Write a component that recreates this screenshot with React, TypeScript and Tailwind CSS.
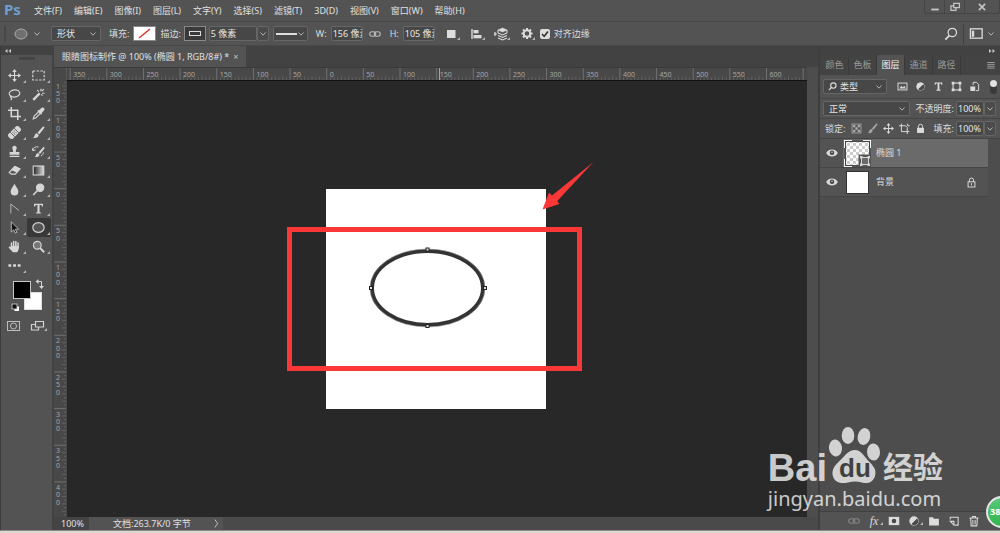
import React from "react";

type IconProps = { children: React.ReactNode; size?: string };

const Icon = ({ children, size = "size-[14px]" }: IconProps) => (
  <svg
    viewBox="0 0 16 16"
    className={`${size} block shrink-0`}
    fill="none"
    stroke="currentColor"
    strokeWidth="1.4"
    aria-hidden="true"
  >
    {children}
  </svg>
);

const Chevron = () => (
  <svg viewBox="0 0 8 6" className="pointer-events-none block h-[6px] w-2 shrink-0" fill="none" stroke="#b4b4b4" aria-hidden="true">
    <path d="M1.5 1.5 4 4.2 6.5 1.5" />
  </svg>
);

const Sep = () => <span className="h-5 w-px shrink-0 bg-[#3f3f3f]" />;

const Corner = () => (
  <svg viewBox="0 0 3 3" className="absolute right-px bottom-[2px] size-[3px]" aria-hidden="true">
    <path d="M3 0V3H0Z" fill="#b4b4b4" />
  </svg>
);

const menus = [
  "文件(F)", "编辑(E)", "图像(I)", "图层(L)", "文字(Y)", "选择(S)",
  "滤镜(T)", "3D(D)", "视图(V)", "窗口(W)", "帮助(H)",
];

const solid = { fill: "currentColor", stroke: "none" };

const LinkGlyph = () => (
  <g>
    <rect x="1" y="5" width="8" height="6" rx="3" />
    <rect x="7" y="5" width="8" height="6" rx="3" />
  </g>
);

const TypeGlyph = () => <path d="M2.5 2h11v3.4h-1.3l-.6-1.8H9.3v8.9l1.7.4V14H5v-1.1l1.7-.4V3.6H4.4l-.6 1.8H2.5Z" {...solid} />;

const MoveGlyph = () => (
  <g>
    <path d="M8 3v10M3 8h10" />
    <path d="M8 0 10.8 3.6H5.2ZM8 16 5.2 12.4h5.6ZM0 8 3.6 5.2v5.6ZM16 8l-3.6 2.8V5.2Z" {...solid} />
  </g>
);

const BrushGlyph = () => (
  <g {...solid}>
    <path d="M14.8.8c.8.5.5 1.4-.2 2.4L9 10.3 6.7 8.2 13 1.3c.6-.6 1.2-.8 1.8-.5Z" />
    <path d="M6 8.9 8.3 11c-.2 2.8-3 4.4-7.2 3.6 2-.8 1.8-2 2.3-3.4C3.9 9.7 4.8 9 6 8.9Z" />
  </g>
);

const AdjustGlyph = () => (
  <g>
    <circle cx="8" cy="8" r="5.5" fill="currentColor" />
    <path d="M12 4.6A5.2 5.2 0 0 1 4.6 12Z" fill="#4a4a4a" stroke="none" />
  </g>
);

const FrameGlyph = () => (
  <g>
    <rect x="3" y="3" width="10" height="10" strokeWidth="1.6" />
    <path d="M1 1h4v4H1zM11 1h4v4h-4zM1 11h4v4H1zM11 11h4v4h-4z" {...solid} />
  </g>
);

const LockGlyph = () => (
  <g>
    <path d="M5 8V4.8a3 3 0 0 1 6 0V8" />
    <rect x="3" y="7" width="10" height="7.5" {...solid} />
  </g>
);

const tools: { name: string; art: React.ReactNode; active?: boolean }[] = [
  { name: "移动", art: <MoveGlyph /> },
  { name: "矩形选框", art: <rect x="1" y="2.5" width="14" height="11" strokeDasharray="3 1.7" /> },
  {
    name: "套索",
    art: (
      <g>
        <path d="M4.5 10.5C1 9 .6 6.2 3 4.2 5.5 2 10.5 1.5 13 3.5c2.8 2.2 1.5 5.8-2 7-2 .8-4.5.8-6.5 0Z" />
        <path d="M4 9.5c-1.5.5-1.5 2.3 0 2.5 1 .2.5 1.8-.7 3" />
      </g>
    ),
  },
  {
    name: "魔棒",
    art: (
      <g>
        <path d="M1.5 14.5 9.5 6.5" strokeWidth="3" />
        <path d="M11 1v3M6.5 2.5l2 2M15.500 6.500h-3M14.500 1.500l-2.300 2.300M13 9.500l-1.500-1.500" />
      </g>
    ),
  },
  { name: "裁剪", art: <path d="M4 0v11.800h12M0 4h12v12" strokeWidth="1.900" /> },
  {
    name: "吸管",
    art: (
      <g>
        <path d="M8.500 5.500 2.500 11.500 1.500 14.500l3-1 6-6" />
        <path d="m7.300 4 1.500-.3L12 .9c2-1.300 4.300 1 3 3L12.300 7.200 12 8.700l-1 .8L6.500 5Z" {...solid} />
      </g>
    ),
  },
  {
    name: "污点修复",
    art: (
      <g transform="rotate(-45 8 8)">
        <rect x="-1" y="4" width="18" height="8" rx="3" fill="currentColor" stroke="none" />
        <path d="M4.500 4v8M11.500 4v8" stroke="#535353" strokeWidth="1" />
        <path d="M6.300 6.500h1M8.700 6.500h1M6.300 9.500h1M8.700 9.500h1" stroke="#535353" />
      </g>
    ),
  },
  { name: "画笔", art: <BrushGlyph /> },
  {
    name: "仿制图章",
    art: <path d="M8 1a2.700 2.700 0 0 1 2.600 3.600C10 6.200 9.500 7 9.700 8.500H14V12H2V8.500h4.300C6.500 7 6 6.200 5.400 4.600A2.700 2.700 0 0 1 8 1ZM2 13.300h12v1.500H2Z" {...solid} />,
  },
  {
    name: "历史记录画笔",
    art: (
      <g>
        <g transform="translate(2 2) scale(.88)"><BrushGlyph /></g>
        <path d="M1 6.500C1.500 3 5 1.500 8 2.500M0 3.500l1 3.500 3.500-1M14 9c0 2-1 3.500-3 4.500" strokeWidth="1.200" />
      </g>
    ),
  },
  {
    name: "橡皮擦",
    art: (
      <g>
        <path d="M8.500 3 14.500 6 9 12.500H4L1.500 10.500Z" />
        <path d="M8.500 3 14.500 6 11 10 4.800 7.200Z" fill="currentColor" />
      </g>
    ),
  },
  {
    name: "渐变",
    art: (
      <g>
        <defs>
          <linearGradient id="toolGradient"><stop stopColor="#222" /><stop offset="1" stopColor="#ddd" /></linearGradient>
        </defs>
        <rect x="1.500" y="2.500" width="13" height="11" fill="url(#toolGradient)" />
      </g>
    ),
  },
  { name: "模糊", art: <path d="M8 .8C10 4.500 12.800 7.500 12.800 10.500a4.800 4.800 0 0 1-9.600 0C3.200 7.500 6 4.500 8 .8Z" {...solid} /> },
  {
    name: "减淡",
    art: (
      <g>
        <circle cx="10" cy="5.800" r="4.500" fill="currentColor" />
        <path d="M7 9 1.500 14.800" strokeWidth="2" />
      </g>
    ),
  },
  { name: "钢笔", art: <path d="M3.500 14V2.500L13.500 10.500" strokeWidth="1.200" stroke="#b8b8b8" /> },
  { name: "文字", art: <TypeGlyph /> },
  { name: "路径选择", art: <path d="M4 1v12.500l3-2.600 1.900 4 2-.9L9.100 10.200l3.900-.3Z" fill="#161616" stroke="#d0d0d0" strokeWidth="1" /> },
  { name: "椭圆", art: <ellipse cx="8" cy="8" rx="7" ry="6" fill="#555" />, active: true },
  {
    name: "抓手",
    art: (
      <g>
        <path d="M4.300 9V3.800M7 8V1.800M9.700 8V2M12.400 9V3.800" strokeWidth="1.900" strokeLinecap="round" />
        <path d="M3.400 7.500h10c.2 4-.9 6-2 7.500H6C4.500 13.500 2.500 11 .8 9.300.6 8 2 7.600 3.400 9Z" {...solid} />
      </g>
    ),
  },
  {
    name: "缩放",
    art: (
      <g>
        <circle cx="6.500" cy="6.500" r="4.800" fill="#777" />
        <path d="m10 10 5 5" strokeWidth="2.400" />
      </g>
    ),
  },
  { name: "更多", art: <path d="M.5 8h3.500M6.300 8h3.500M12 8h3.500" strokeWidth="3" /> },
];

const UNIT = 3.665;
const range = (from: number, to: number) => Array.from({ length: to - from + 1 }, (_, i) => from + i);
const columns = range(-70, 130);
const rows = range(-29, 89);

const HorizontalRuler = () => (
  <svg className="block h-3 w-full" aria-label="水平标尺">
    <svg x="50%" overflow="visible">
      {columns.map((n) => {
        const x = -110.3 + n * UNIT;
        const major = n % 10 === 0;
        return (
          <g key={n}>
            <path d={`M${x} ${major ? 0 : n % 2 ? 9.5 : 8.5}V12`} stroke={major ? "#707070" : "#636363"} />
            {major && n < 130 && <text x={x + 3} y="9" fontSize="7" fill="#a5a5a5">{Math.abs(n * 5)}</text>}
          </g>
        );
      })}
      <path d="M2.5 0V12" stroke="#a5a5a5" />
    </svg>
  </svg>
);

const VerticalRuler = () => (
  <svg className="block h-full w-[13px] shrink-0 bg-[#484848]" aria-label="垂直标尺">
    <svg y="50%" overflow="visible">
      <text x="2" y="-210" fontSize="7" fill="#a5a5a5">1</text>
      <text x="2" y="-203" fontSize="7" fill="#a5a5a5">5</text>
      <text x="2" y="-196" fontSize="7" fill="#a5a5a5">0</text>
      {rows.map((n) => {
        const y = -109.8 + n * UNIT;
        const major = n % 10 === 0;
        return (
          <g key={n}>
            <path d={`M${major ? 0 : n % 2 ? 10 : 8} ${y}H12`} stroke={major ? "#707070" : "#636363"} />
            {major &&
              String(Math.abs(n * 5)).split("").map((d, i) => (
                <text key={i} x="2" y={y + 8 + i * 7.3} fontSize="7" fill="#a5a5a5">{d}</text>
              ))}
          </g>
        );
      })}
    </svg>
  </svg>
);

const Artboard = () => (
  <svg viewBox="0 0 220 220" className="block size-[220px] shrink-0 overflow-visible" role="img" aria-label="椭圆 1">
    <rect width="220" height="220" fill="#fff" />
    <ellipse cx="101.500" cy="99" rx="55.500" ry="37" fill="none" stroke="#333" strokeWidth="4" />
    <ellipse cx="101.500" cy="99" rx="57.500" ry="39" fill="none" stroke="#999" strokeWidth=".6" />
    {[[101.500, 60.500], [101.500, 137], [45, 99], [159, 99]].map(([x, y]) => (
      <g key={`${x}-${y}`}>
        <rect x={x - 2} y={y - 2} width="4" height="4" fill="#222" />
        <rect x={x - 1} y={y - 1} width="2" height="2" fill="#ddd" />
      </g>
    ))}
    <rect x="-36.500" y="40.500" width="290" height="139" fill="none" stroke="#fb3737" strokeWidth="5" />
    <path d="M216.500 20.500 223 3.500l3 3L267.500-27 231.300 12l2 3Z" fill="#fb3737" />
  </svg>
);

const box = "rounded-[2px] border border-[#666] bg-[#474747] text-[#e6e6e6] outline-none";

const Dropdown = ({ label, value, width, indent }: { label: string; value: string; width: string; indent: string }) => (
  <div className={`relative flex h-[15px] items-center ${width}`}>
    <select aria-label={label} className={`h-full w-full appearance-none py-0 ${indent} ${box}`}>
      <option>{value}</option>
    </select>
    <span className="absolute right-1"><Chevron /></span>
  </div>
);

const PercentField = ({ id }: { id: string }) => (
  <div className="flex shrink-0">
    <input id={id} defaultValue="100%" className={`h-[15px] w-[28px] pl-px ${box}`} />
    <button aria-label="调整数值" className="flex h-[15px] w-3 items-center justify-center rounded-[2px] border border-[#666] bg-[#4b4b4b]"><Chevron /></button>
  </div>
);

const Toolbox = () => (
  <aside className="flex w-[52px] shrink-0 flex-col border-l border-[#3c3c3c] bg-[#535353]">
    <div className="flex h-[9px] items-center bg-[#424242] pl-1">
      <svg viewBox="0 0 6 4" className="h-1 w-[6px]" fill="#c8c8c8" aria-hidden="true"><path d="M2.500 0v4L0 2ZM6 0v4L3.500 2Z" /></svg>
    </div>
    <div className="flex h-[11px] items-start justify-center pt-[2px]"><span className="h-[3px] w-4 bg-[#444]" /></div>
    <div className="grid grid-cols-2 px-[1px]">
      {tools.map((t) => (
        <button
          key={t.name}
          aria-label={t.name}
          className={`relative flex h-[19px] items-center justify-center text-[#d6d6d6] ${t.active ? "rounded-[2px] bg-[#383838]" : ""}`}
        >
          <Icon size="size-[13px]">{t.art}</Icon>
          <Corner />
        </button>
      ))}
    </div>
    <svg viewBox="0 0 50 58" className="block h-[58px] w-[50px] text-[#d6d6d6]" fill="none" role="img" aria-label="前景色和背景色">
      <rect x="23.500" y="17.500" width="17" height="17" fill="#fff" stroke="#ddd" />
      <rect x="12.500" y="6.500" width="17" height="17" fill="#000" stroke="#c8c8c8" />
      <path d="M36 6.500h4.500V12" stroke="#d6d6d6" />
      <path d="m37.500 4-3 2.500 3 2.500ZM38 11h5l-2.500 3Z" fill="#d6d6d6" />
      <rect x="13.500" y="31.500" width="4.500" height="4.500" fill="#fff" />
      <rect x="11" y="29" width="5" height="5" fill="#111" stroke="#d6d6d6" strokeWidth=".8" />
      <rect x="6.500" y="46.500" width="12" height="9" stroke="#bdbdbd" />
      <circle cx="12.500" cy="51" r="3" stroke="#bdbdbd" />
      <path d="M34.500 46.500h8v5.500h-8zM34 49.500h-3.500v5.500h7V52.500" stroke="#d0d0d0" strokeWidth="1.200" />
      <path d="M46 53v3h-3Z" fill="#b4b4b4" />
    </svg>
  </aside>
);

const OptionsBar = () => (
  <div className="flex h-[25px] items-center border-y border-[#484848] pr-[5px] text-[#dcdcdc]">
    <span className="ml-1 h-4 w-[2px] bg-[#484848]" />
    <button aria-label="椭圆工具" className="ml-2 flex items-center gap-[5px]">
      <svg viewBox="0 0 14 12" className="h-3 w-[14px]" aria-hidden="true"><ellipse cx="7" cy="6" rx="6" ry="5" fill="#707070" stroke="#aaa" /></svg>
      <Chevron />
    </button>
    <span className="mx-[5px]"><Sep /></span>
    <Dropdown label="模式" value="形状" width="w-[50px]" indent="pl-[5px]" />
    <span className="ml-2">填充:</span>
    <button aria-label="填充颜色" className="ml-1 h-[15px] w-[23px] border border-[#888] bg-white">
      <svg viewBox="0 0 21 13" className="block h-full w-full" aria-hidden="true"><path d="m5 11 11-9" stroke="#e03030" strokeWidth="1.500" /></svg>
    </button>
    <span className="ml-1">描边:</span>
    <button aria-label="描边颜色" className="ml-[3px] flex h-[15px] w-[22px] items-center justify-center border border-[#888] bg-[#3a3a3a]">
      <span className="h-[5px] w-3 border border-[#ddd]" />
    </button>
    <div className="ml-[3px] flex">
      <input aria-label="描边宽度" defaultValue="5 像素" className={`h-[15px] w-[48px] pl-px ${box}`} />
      <button aria-label="宽度选项" className="flex h-[15px] w-3 items-center justify-center rounded-[2px] border border-[#666] bg-[#4b4b4b]"><Chevron /></button>
    </div>
    <button aria-label="描边类型" className={`ml-1 flex h-[15px] w-[35px] items-center justify-between px-[2px] ${box}`}>
      <span className="h-[2px] w-[21px] bg-[#ddd]" /><Chevron />
    </button>
    <span className="mx-1"><Sep /></span>
    <label htmlFor="shapeW">W:</label>
    <input id="shapeW" defaultValue="156 像素" className={`ml-1 h-[15px] w-8 pl-px ${box}`} />
    <button aria-label="链接宽高" className="mx-[6px] text-[#bbb]"><Icon size="size-3"><LinkGlyph /></Icon></button>
    <label htmlFor="shapeH" className="ml-[3px]">H:</label>
    <input id="shapeH" defaultValue="105 像素" className={`ml-1 h-[15px] w-8 pl-px ${box}`} />
    <span className="mx-1"><Sep /></span>
    <div className="ml-px flex items-center gap-2">
      <button aria-label="路径操作" className="relative size-[17px]">
        <Icon size="size-4"><rect x="3" y="4" width="8.500" height="8" {...solid} /></Icon><Corner />
      </button>
      <button aria-label="对齐" className="relative size-[17px]">
        <Icon size="size-4"><path d="M3 3v10" /><rect x="4.500" y="4" width="5" height="3.300" {...solid} /><rect x="4.500" y="9" width="8" height="3.300" {...solid} /></Icon><Corner />
      </button>
      <button aria-label="排列" className="relative size-[17px]">
        <Icon size="size-4"><path d="M-1 8h4M1 6v4" strokeWidth="1.200" /><path d="m8.500 2 4.500 2-4.500 2L4 4Z" fill="currentColor" strokeWidth=".6" /><path d="m4 7 4.500 2L13 7M4 9.500l4.500 2 4.500-2M4 12l4.500 2 4.500-2M4 4v3M13 4v3" strokeWidth="1.100" /></Icon><Corner />
      </button>
    </div>
    <span className="mx-1"><Sep /></span>
    <button aria-label="设置" className="relative size-[17px]">
      <Icon size="size-4"><circle cx="8" cy="7.500" r="3.300" strokeWidth="2" /><path d="M8 2v2M8 11v2M2.500 7.500h2M11.500 7.500h2M4 3.500l1.500 1.500M12 3.500 10.500 5M4 11.500 5.500 10M12 11.500 10.500 10" strokeWidth="2" /></Icon><Corner />
    </button>
    <label className="ml-1 flex items-center gap-1">
      <span className="relative block size-[10px]">
        <input type="checkbox" defaultChecked className="block size-[10px] appearance-none rounded-[2px] bg-[#dcdcdc]" />
        <svg viewBox="0 0 10 10" className="pointer-events-none absolute inset-0 size-[10px]" fill="none" stroke="#333" strokeWidth="1.600" aria-hidden="true"><path d="m2 5 2.200 2.300L8 2.500" /></svg>
      </span>
      对齐边缘
    </label>
    <button aria-label="搜索" className="mr-[5px] ml-auto">
      <Icon><circle cx="9.500" cy="6.300" r="4.800" /><path d="M6 9.800 1.500 14.300" strokeWidth="2" /></Icon>
    </button>
    <Sep />
    <button aria-label="工作区" className="ml-[5px] flex items-center gap-[3px]">
      <Icon size="size-[15px]"><rect x="1.500" y="3" width="12.500" height="10" /><rect x="3" y="5" width="2.500" height="6.500" {...solid} /></Icon>
      <Chevron />
    </button>
  </div>
);

const Eye = () => (
  <Icon size="size-3">
    <path d="M1 8c3.500-5.300 10.500-5.300 14 0-3.500 5.300-10.500 5.300-14 0Z" fill="currentColor" />
    <circle cx="8" cy="7.800" r="3" fill="#444" stroke="none" />
    <circle cx="8" cy="7" r="1" {...solid} />
  </Icon>
);

const tabs = ["颜色", "色板", "图层", "通道", "路径"];

const filters: [string, React.ReactNode][] = [
  ["像素", <g><rect x="1.500" y="3" width="13" height="10" /><path d="m3.500 11 2.700-4 2.300 2.500L10.500 7l2.500 4Z" {...solid} /></g>],
  ["调整", <AdjustGlyph />],
  ["文字", <TypeGlyph />],
  ["形状", <FrameGlyph />],
  ["智能对象", <g><path d="M6 6V2h5l3 3v9h-4" /><rect x="2" y="8" width="7" height="6.500" {...solid} /></g>],
];

const locks: [string, React.ReactNode][] = [
  ["透明像素", <g opacity=".65"><rect x="1.500" y="1.500" width="13" height="13" strokeWidth="1.200" /><path d="M3 3h3.300v3.300H3zM9.700 3H13v3.300H9.700zM6.300 6.300h3.400v3.400H6.300zM3 9.700h3.300V13H3zM9.700 9.700H13V13H9.700z" {...solid} /></g>],
  ["图像像素", <g opacity=".6"><BrushGlyph /></g>],
  ["位置", <MoveGlyph />],
  ["画板", <path d="M3.500 1v11.500H15M0 4h9.500l2.500 2.500V16M12.500 1v3h3" />],
  ["全部", <LockGlyph />],
];

const LayersPanel = () => (
  <aside className="flex w-[182px] shrink-0 flex-col border-l-2 border-[#3e3e3e] bg-[#4d4d4d] text-[#dcdcdc]">
    <div className="flex h-[9px] items-center justify-end bg-[#424242] pr-[5px]">
      <svg viewBox="0 0 6 4" className="h-1 w-[6px]" fill="#c8c8c8" aria-hidden="true"><path d="M0 0v4l2.500-2ZM3.500 0v4L6 2Z" /></svg>
    </div>
    <div role="tablist" className="flex h-5 items-stretch bg-[#434343] pr-1 pl-px">
      {tabs.map((t) => (
        <button
          key={t}
          role="tab"
          aria-selected={t === "图层"}
          className={`w-7 border-r border-[#3a3a3a] text-center ${t === "图层" ? "bg-[#535353] text-[#f2f2f2]" : "text-[#9a9a9a]"}`}
        >
          {t}
        </button>
      ))}
      <button aria-label="面板菜单" className="ml-auto"><Icon size="size-[10px]"><path d="M2 4h12M2 7h12M2 10h12M2 13h12" stroke="#a5a5a5" /></Icon></button>
    </div>
    <div className="flex h-6 items-center border-b border-[#454545] bg-[#535353] px-[3px]">
      <div className="relative flex items-center">
        <Dropdown label="筛选" value="类型" width="w-[64px]" indent="pl-4" />
        <span className="pointer-events-none absolute left-[5px]"><Icon size="size-[9px]"><circle cx="9.500" cy="6.300" r="4.800" strokeWidth="2" /><path d="M6 9.800 1.500 14.300" strokeWidth="2" /></Icon></span>
      </div>
      <div className="ml-[10px] flex gap-[7px]">
        {filters.map(([n, g]) => <button key={n} aria-label={n}><Icon size="size-[11px]">{g}</Icon></button>)}
      </div>
      <button aria-label="启用筛选" className="ml-auto flex h-[14px] w-[7px] items-start rounded-full bg-[#3a3a3a]"><span className="size-[7px] rounded-full bg-[#e2e2e2]" /></button>
    </div>
    <div className="flex h-5 items-center justify-between border-b border-[#454545] bg-[#535353] pr-1 pl-[3px]">
      <Dropdown label="混合模式" value="正常" width="w-[87px]" indent="pl-[5px]" />
      <div className="flex items-center gap-[2px]">
        <label htmlFor="opacity">不透明度:</label>
        <PercentField id="opacity" />
      </div>
    </div>
    <div className="flex h-5 items-center border-b border-[#454545] bg-[#535353] pr-1 pl-[5px]">
      <span>锁定:</span>
      <div className="ml-[6px] flex gap-[5px]">
        {locks.map(([n, g]) => <button key={n} aria-label={n}><Icon size="size-[11px]">{g}</Icon></button>)}
      </div>
      <div className="ml-auto flex items-center gap-[2px]">
        <label htmlFor="fill">填充:</label>
        <PercentField id="fill" />
      </div>
    </div>
    <ul className="mr-3">
      <li className="flex h-[29px] items-center border-b border-[#454545] bg-[#535353]">
        <button aria-label="隐藏椭圆 1" className="flex h-full w-[23px] items-center justify-center"><Eye /></button>
        <div className="flex h-full flex-1 items-center bg-[#6a6a6a] pl-px">
          <svg viewBox="0 0 27 27" className="block size-[27px]" role="img" aria-label="椭圆 1 缩览图">
            <defs>
              <pattern id="checker" width="6" height="6" patternUnits="userSpaceOnUse">
                <rect width="6" height="6" fill="#fff" /><path d="M0 0h3v3H0zM3 3h3v3H3z" fill="#ccc" />
              </pattern>
            </defs>
            <rect x=".5" y=".5" width="26" height="26" fill="#444" stroke="#f4f4f4" />
            <path d="M8 0h11M8 27h11M0 8v11M27 8v11" stroke="#555" strokeWidth="3" />
            <rect x="2" y="2" width="23" height="23" fill="url(#checker)" />
            <path d="M14.500 14.500H27V27H14.500Z" fill="#555" />
            <path d="M17.500 17.500h7v7h-7z" fill="#6a6a6a" stroke="#d4d4d4" />
            <path d="M16 16h2.500v2.500H16zM23.500 16H26v2.500h-2.500zM16 23.500h2.500V26H16zM23.500 23.500H26V26h-2.500z" fill="#d4d4d4" />
          </svg>
          <span className="ml-[5px]">椭圆 1</span>
        </div>
      </li>
      <li className="flex h-[29px] items-center border-b border-[#454545] bg-[#535353]">
        <button aria-label="隐藏背景" className="flex h-full w-[23px] items-center justify-center"><Eye /></button>
        <div className="flex h-full flex-1 items-center pr-[11px] pl-[3px]">
          <span className="size-[23px] border border-[#333] bg-white" />
          <span className="ml-[7px]">背景</span>
          <span className="ml-auto"><Icon size="size-[11px]"><path d="M5 7V4.500a3 3 0 0 1 6 0V7M8 9v3" /><rect x="3" y="7" width="10" height="7.500" /></Icon></span>
        </div>
      </li>
    </ul>
    <div className="mt-auto flex h-[19px] items-center justify-end gap-2 border-t border-[#414141] bg-[#535353] pr-5">
      <button aria-label="链接图层" className="text-[#858585]"><Icon size="size-3"><LinkGlyph /></Icon></button>
      <button aria-label="图层样式" className="relative -mr-1 w-4 pr-1 font-['Liberation_Serif',serif] text-[12px] leading-3 italic">fx<Corner /></button>
      <button aria-label="添加蒙版"><Icon size="size-3"><rect x="1" y="2.500" width="14" height="11" {...solid} /><circle cx="8" cy="8" r="3" fill="#4a4a4a" stroke="none" /></Icon></button>
      <button aria-label="新建调整图层" className="relative -mr-1 w-4"><Icon size="size-3"><AdjustGlyph /></Icon><Corner /></button>
      <button aria-label="新建组"><Icon size="size-3"><path d="M1.500 3h5l1.500 2h6.500v9h-13Z" {...solid} /></Icon></button>
      <button aria-label="新建图层"><Icon size="size-3"><path d="M3 6V3h10.500v10.500H9.500M3 8.500h5v5Z" /></Icon></button>
      <button aria-label="删除图层"><Icon size="size-3"><path d="M2 4h12M6 3.500V2h4v1.500M3.500 4.500l.7 10h7.600l.7-10M6.500 6.500v6M9.500 6.500v6" /></Icon></button>
    </div>
  </aside>
);

const Watermark = () => (
  <div className="pointer-events-none absolute right-[57px] bottom-6 text-white opacity-75">
    <div className="flex h-[62px] items-end font-['Liberation_Sans',sans-serif] font-bold">
      <span className="text-[38px] leading-[42px]">Bai</span>
      <span className="relative ml-[2px] block h-[58px] w-[48px] self-start">
        <svg viewBox="0 0 48 58" className="absolute inset-0 size-full overflow-visible" fill="#fff" aria-hidden="true">
          <ellipse cx="6.500" cy="21" rx="6.500" ry="8.500" transform="rotate(-8 6.500 21)" />
          <ellipse cx="19" cy="8.500" rx="6.300" ry="8.500" />
          <ellipse cx="35" cy="9.500" rx="6.300" ry="8.500" transform="rotate(12 35 9.500)" />
          <ellipse cx="44.500" cy="25" rx="6.500" ry="8.500" transform="rotate(-5 44.500 25)" />
          <path d="M26 23c6 0 8.500 5.500 13 10.500 5 5 9 9 7 15.500-2 7-8 8-13 6.500-5-1.200-9-1.200-14 0C13 57 6 56 4 49.500c-2-6.500 2-11.500 7-16C16 29 19 23 26 23Z" />
        </svg>
        <span className="absolute bottom-[3px] left-[10px] text-[26px] leading-[28px] text-[#3c3c3c]">du</span>
      </span>
      <span className="ml-[6px] font-['Noto_Sans_CJK_SC',sans-serif] text-[30px] leading-[48px]">经验</span>
    </div>
    <div className="font-['Noto_Sans',sans-serif] text-[20px] leading-5">jingyan.baidu.com</div>
  </div>
);

export default function App() {
  return (
    <div className="relative flex min-h-screen flex-col overflow-hidden bg-[#535353] font-['Noto_Sans','Noto_Sans_CJK_SC',sans-serif] text-[9px] leading-3 text-[#e0e0e0]">
      <header className="flex h-[21px] items-center">
        <span className="w-[28px] self-start pl-1 text-[15px] leading-[18px] font-bold text-[#6f9fd0]">Ps</span>
        <nav className="flex">
          {menus.map((m) => <button key={m} className="px-[6px]">{m}</button>)}
        </nav>
        <div className="ml-auto flex h-[14px] self-start rounded-b-[3px] border border-t-0 border-[#454545] text-[#c4c4c4]">
          <button aria-label="最小化" className="flex w-5 items-center justify-center border-r border-[#454545]"><Icon size="size-[10px]"><path d="M2 12h12" strokeWidth="3" /></Icon></button>
          <button aria-label="还原" className="flex w-5 items-center justify-center border-r border-[#454545]"><Icon size="size-[10px]"><path d="M6 2h9v7H6zM6 6H1.500v7.500h8V9.500" strokeWidth="2" /></Icon></button>
          <button aria-label="关闭" className="flex w-[34px] items-center justify-center"><Icon size="size-[10px]"><path d="m3 3 10 10M13 3 3 13" strokeWidth="2.500" /></Icon></button>
        </div>
      </header>
      <OptionsBar />
      <div className="flex flex-1 bg-[#424242]">
        <Toolbox />
        <main className="ml-[2px] flex min-w-0 flex-1 flex-col">
          <div className="flex h-[21px]">
            <div className="flex items-center gap-1 bg-[#535353] px-2">
              <span>眼睛图标制作 @ 100% (椭圆 1, RGB/8#) *</span>
              <button aria-label="关闭文档" className="text-[#c4c4c4]">×</button>
            </div>
          </div>
          <div className="flex flex-1">
            <div className="flex min-w-0 flex-1 flex-col">
              <div className="flex h-[13px] border-t border-[#3a3a3a] bg-[#484848]">
                <span className="w-[13px] shrink-0 border-r border-dotted border-[#666]" />
                <HorizontalRuler />
              </div>
              <div className="relative flex flex-1">
                <div className="absolute inset-y-0 left-0"><VerticalRuler /></div>
                <div className="ml-[13px] flex flex-1 items-center justify-center border-t border-[#111] bg-[#282828] pr-[2px]"><Artboard /></div>
              </div>
            </div>
            <div className="w-[11px] bg-[#4d4d4d]" />
          </div>
          <footer className="flex h-[13px] items-stretch bg-[#4a4a4a] leading-[13px]">
            <span className="w-[35px] bg-[#444] pl-[7px]">100%</span>
            <button className="flex w-[134px] items-center justify-between bg-[#535353] pr-[2px] pl-6">
              <span>文档:263.7K/0 字节</span>
              <Icon size="size-[9px]"><path d="m5 1 5 7-5 7" /></Icon>
            </button>
          </footer>
        </main>
        <LayersPanel />
      </div>
      <div className="h-[3px] border-t border-[#8a8a8a] bg-[#dcd8d0]" />
      <Watermark />
      <div className="absolute -right-[18px] bottom-[5px] flex size-8 items-center rounded-full border-2 border-[#e4e4e4] bg-linear-to-b from-[#58c878] to-[#2eb64c] pl-[2px] font-bold text-white">38</div>
    </div>
  );
}
